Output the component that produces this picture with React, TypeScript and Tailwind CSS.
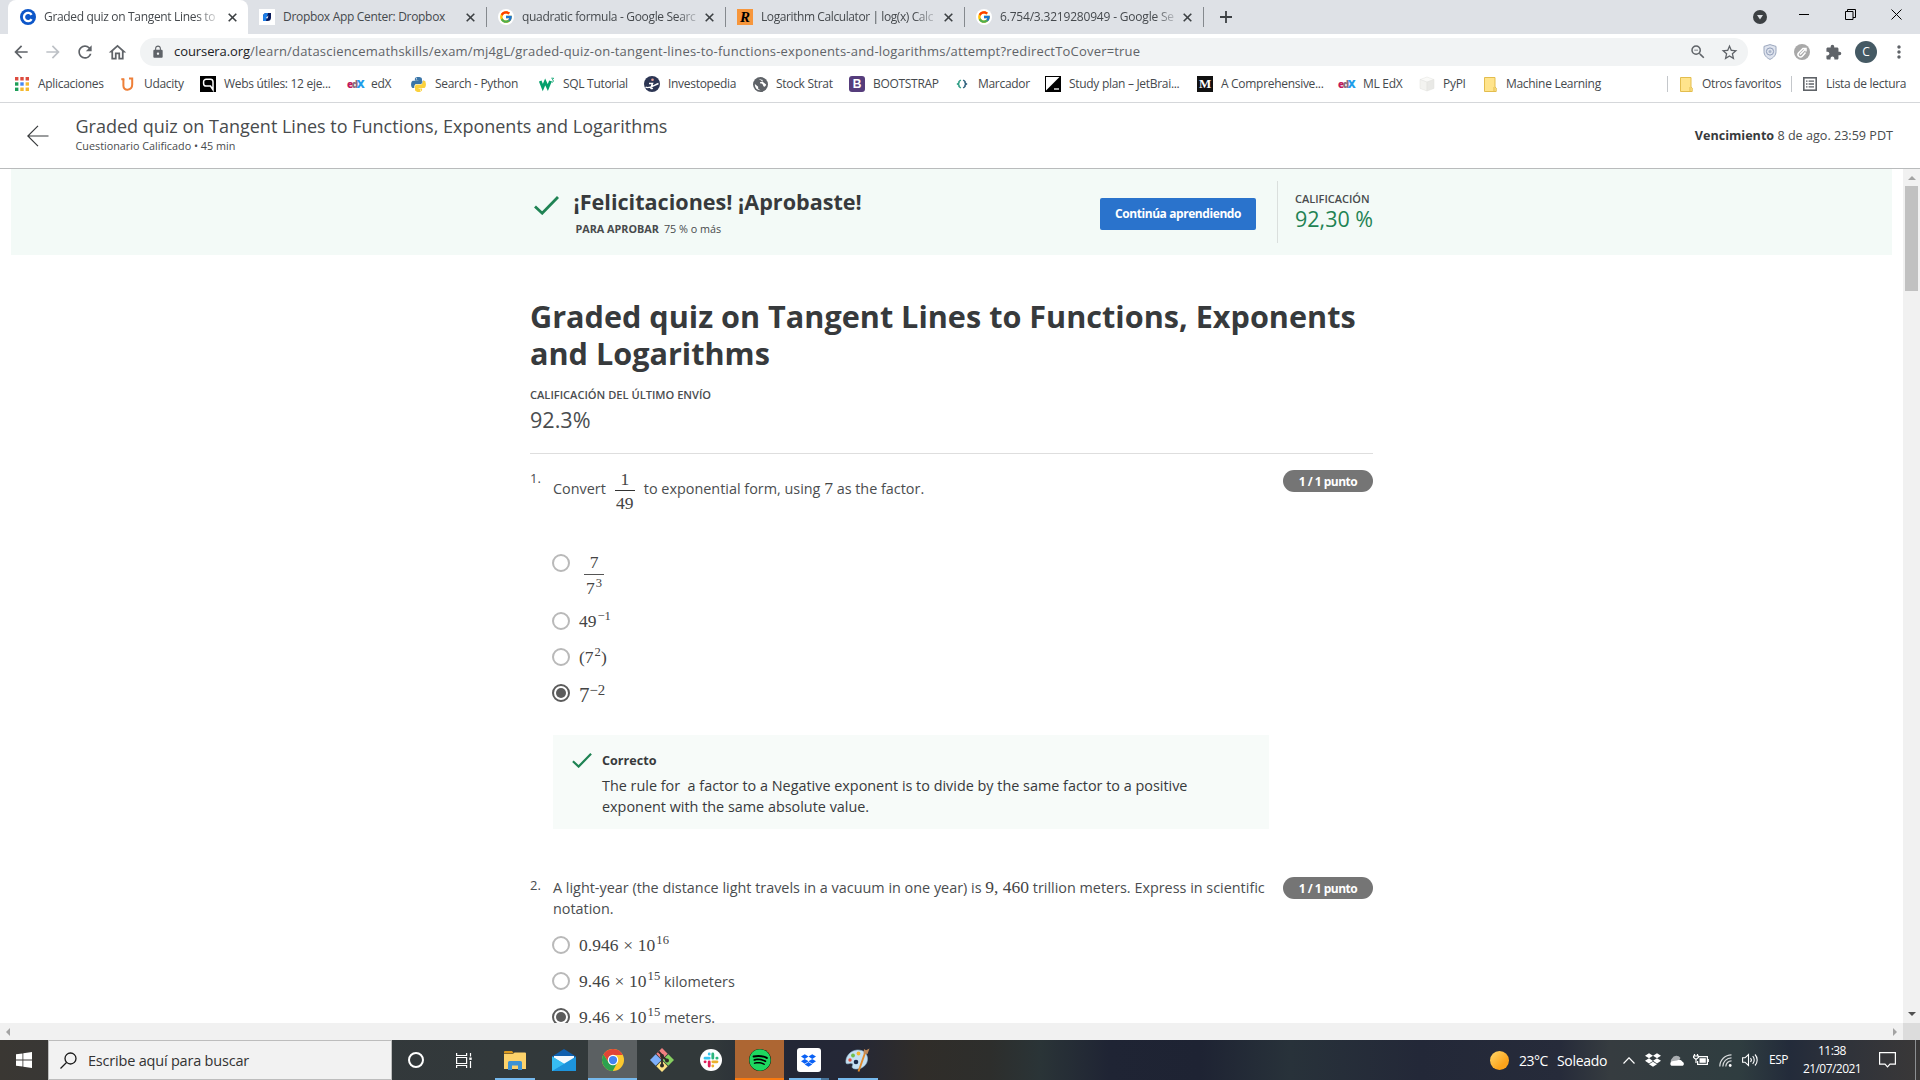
import React from "react";
import { FcGoogle } from "react-icons/fc";
import { FaDropbox, FaSpotify, FaPython } from "react-icons/fa";
import {
  MdArrowBack,
  MdArrowForward,
  MdRefresh,
  MdOutlineHome,
  MdLock,
  MdStarBorder,
  MdExtension,
  MdMoreVert,
  MdZoomOut,
} from "react-icons/md";

type Kids = { children?: React.ReactNode };

/* ---------- site icons ---------- */

const CourseraIcon = () => (
  <svg className="size-4" viewBox="0 0 16 16">
    <circle cx="8" cy="8" r="8" fill="#0c56c9" />
    <path d="M11.6 5.9A4.1 4.1 0 1 0 11.6 10.1" fill="none" stroke="#fff" strokeWidth="2.3" />
  </svg>
);

const AppCenterIcon = () => (
  <svg className="size-4" viewBox="0 0 16 16">
    <rect width="16" height="16" fill="#fff" />
    <path d="M4 7.500A3.500 3.500 0 0 1 7.500 4H12v4.500A3.500 3.500 0 0 1 8.500 12H4z" fill="#0a1b5c" />
    <path d="M4 7.500A3.500 3.500 0 0 1 7.500 4H9L7 12H4z" fill="#1e7fe8" />
    <path d="M9.500 6.500L8.500 9.500 6.800 9z" fill="#fff" />
  </svg>
);

const GoogleIcon = () => (
  <span className="flex size-4 items-center justify-center rounded-full bg-white">
    <FcGoogle className="size-[14px]" />
  </span>
);

const RIcon = () => (
  <span className="flex size-4 items-center justify-center bg-[#f7963b] font-['Liberation_Serif',serif] text-[15px] leading-4 font-bold text-black italic">
    R
  </span>
);

const AppsIcon = () => (
  <svg className="size-[14px]" viewBox="0 0 14 14">
    <path d="M0 0h3.4v3.4H0zM5.3 0h3.4v3.4H5.3zM10.6 0H14v3.4h-3.4z" fill="#dd4b3e" />
    <path d="M0 5.3h3.4v3.4H0z" fill="#1e9e58" />
    <path d="M5.3 5.3h3.4v3.4H5.3z" fill="#4587f3" />
    <path d="M10.6 5.3H14v3.4h-3.4z" fill="#f5b92e" />
    <path d="M0 10.6h3.4V14H0z" fill="#1e9e58" />
    <path d="M5.3 10.6h3.4V14H5.3zM10.6 10.6H14V14h-3.4z" fill="#f5b92e" />
  </svg>
);

const UdacityIcon = () => (
  <svg className="h-[15px] w-[13px]" viewBox="0 0 13 15" fill="none" stroke="#ee7f38" strokeWidth="2">
    <path d="M2.400 2.200v6.600c0 2.600 1.800 4.200 4.200 4 2.800-.3 4.600-2.400 4.600-5.200V1.600H8" />
    <path d="M.3 2.200h3" />
  </svg>
);

const QIcon = () => (
  <svg className="size-4" viewBox="0 0 16 16">
    <rect width="16" height="16" fill="#000" />
    <path d="M13 13.800V5.800a2.600 2.600 0 0 0-2.600-2.600H6.200a2.600 2.600 0 0 0-2.600 2.600v1.600A2.600 2.600 0 0 0 6.200 10H10.500z" fill="none" stroke="#fff" strokeWidth="1.500" />
  </svg>
);

const EdxIcon = () => (
  <span className="flex w-4 items-center font-['Open_Sans',sans-serif] text-[10px] leading-4 font-extrabold tracking-[-1.500px]">
    <span className="text-[#c0185c]">e</span>
    <span className="text-[#8d6a7c]">d</span>
    <span className="text-[11px] text-[#1f9dea]">X</span>
  </span>
);

const PythonIcon = () => (
  <span className="relative block size-[17px]">
    <FaPython className="absolute inset-0 size-[17px] text-[#3a75a8] [clip-path:polygon(0_0,100%_0,100%_28%,70%_50%,30%_52%,25%_78%,0_78%)]" />
    <FaPython className="absolute inset-0 size-[17px] text-[#fbd13c] [clip-path:polygon(100%_22%,100%_100%,20%_100%,25%_72%,30%_52%,70%_50%,76%_22%)]" />
  </span>
);

const W3Icon = () => (
  <svg className="size-4" viewBox="0 0 16 16" fill="none" stroke="#04a06c">
    <path d="M1.200 5l2.600 6.500L6.200 6l2.600 5.500L11.500 5" strokeWidth="2.800" />
    <path d="M12.300 2.200h2.300l-1.200 1.600a1.200 1.200 0 1 1-1.300 1.700" strokeWidth=".9" />
  </svg>
);

const InvestopediaIcon = () => (
  <svg className="size-4" viewBox="0 0 16 16">
    <circle cx="8" cy="8" r="8" fill="#2c3553" />
    <circle cx="8.500" cy="3.800" r="1.300" fill="#e8a49a" />
    <path d="M5 7.500h3.500L7 11.500c-.4 1.200.6 1.400 1.800.7M1.500 11c3 2.500 8-1.500 13-3.500" fill="none" stroke="#fff" strokeWidth="1.500" />
  </svg>
);

const GlobeIcon = () => (
  <svg className="size-[15px]" viewBox="0 0 16 16">
    <circle cx="8" cy="8" r="8" fill="#5f6368" />
    <path d="M2 7.500l3.500 3v2L8 14c-3.500.2-6.200-2.500-6-6.500zM6.500 2.200c1.500 0 2 1 3.500.8 1 2-.5 2.500-2.500 2.700-.5 1.500 1 1 2.500 1.800 1 .8.500 2.500 2 3 1.200-.5 2-1.500 2-2.500" fill="#fff" />
  </svg>
);

const BootstrapIcon = () => (
  <span className="flex size-4 items-center justify-center rounded-[3px] bg-[#563d7c] font-['Liberation_Sans',sans-serif] text-[12px] leading-4 font-bold text-white">
    B
  </span>
);

const BracketsIcon = () => (
  <svg className="h-4 w-3" viewBox="0 0 12 16" fill="none" strokeWidth="1.500">
    <path d="M4.800 4L3 5.500v1.300L1.600 8 3 9.200v1.300L4.800 12" stroke="#2b9c83" />
    <path d="M7.200 4L9 5.500v1.300L10.400 8 9 9.200v1.300L7.200 12" stroke="#2d5f7c" />
  </svg>
);

const JetbrainsIcon = () => (
  <svg className="size-4" viewBox="0 0 16 16">
    <rect width="16" height="16" fill="#000" />
    <path d="M1 1h13.500L1 14.500z" fill="#fff" />
    <path d="M9 13h5" stroke="#fff" strokeWidth="1.300" />
  </svg>
);

const MediumIcon = () => (
  <span className="flex size-4 items-center justify-center bg-[#111] font-['Liberation_Serif',serif] text-[13px] leading-4 font-bold text-white">
    M
  </span>
);

const PypiIcon = () => (
  <svg className="size-4" viewBox="0 0 16 16" stroke="#e2e2df" strokeWidth=".5">
    <path d="M1 3.500L8 1l7 2.500-7 2.600z" fill="#fafaf8" />
    <path d="M1 3.500l7 2.600V15l-7-2.600z" fill="#f3f3f0" />
    <path d="M15 3.500L8 6.100V15l7-2.600z" fill="#e9e9e6" />
  </svg>
);

const FolderMark = () => (
  <svg className="h-[15px] w-[13px]" viewBox="0 0 13 15">
    <path d="M.5.500h10.500v9.500l1.200 1v3.500H.5z" fill="#ffe48c" stroke="#e3bd4e" />
    <path d="M10 10v4.500" stroke="#e3bd4e" />
  </svg>
);

const ReadingListIcon = () => (
  <svg className="size-[14px]" viewBox="0 0 14 14" fill="none" stroke="#5f6368" strokeWidth="1.600">
    <rect x=".8" y=".8" width="12.400" height="12.400" />
    <path d="M3 4.200h1.500M5.600 4.200H11M3 7h1.500M5.600 7H11M3 9.800h1.500M5.600 9.800H11" strokeWidth="1.300" />
  </svg>
);

/* ---------- browser chrome ---------- */

const tabs = [
  { icon: <GoogleIcon />, title: "quadratic formula - Google Searc", cls: "tracking-[-0.33px]", fade: true },
  { icon: <RIcon />, title: "Logarithm Calculator | log(x) Calc", cls: "tracking-[-0.41px]", fade: true },
  { icon: <GoogleIcon />, title: "6.754/3.3219280949 - Google Se", cls: "tracking-[-0.19px]", fade: true },
];

const CloseGlyph = () => (
  <svg className="size-[9px] shrink-0" viewBox="0 0 9 9" stroke="#3c4043" strokeWidth="1.600">
    <path d="M.7.700l7.600 7.600M8.300.700L.7 8.300" />
  </svg>
);

function Tab({ icon, title, cls, active, fade }: { icon: React.ReactNode; title: string; cls: string; active?: boolean; fade?: boolean }) {
  return (
    <div
      className={
        active
          ? "flex h-[34px] w-[240px] items-center rounded-t-lg bg-white pr-[11px] pl-3"
          : "flex h-[34px] w-[239px] items-center pr-[12px] pl-[11px]"
      }
    >
      <span className="w-6 shrink-0">{icon}</span>
      <span
        className={
          (fade ? "[mask-image:linear-gradient(to_right,black_89%,rgba(0,0,0,0.25))] " : "") +
          "text-[12px] leading-[18px] whitespace-nowrap text-[#45494d] " +
          cls
        }
      >
        {title}
      </span>
      <span className="ml-auto">
        <CloseGlyph />
      </span>
    </div>
  );
}

const TabDivider = () => <span className="-ml-px h-5 w-px bg-[#85898e]" />;

function TabStrip() {
  return (
    <div className="flex h-[34px] items-center bg-[#dee1e6] pl-2">
      <Tab active fade icon={<CourseraIcon />} title="Graded quiz on Tangent Lines to" cls="tracking-[-0.33px]" />
      <Tab icon={<AppCenterIcon />} title="Dropbox App Center: Dropbox" cls="tracking-[-0.31px]" />
      <TabDivider />
      {tabs.map((t) => (
        <React.Fragment key={t.title}>
          <Tab {...t} />
          <TabDivider />
        </React.Fragment>
      ))}
      <svg className="ml-4 size-3" viewBox="0 0 12 12" stroke="#3c4043" strokeWidth="1.800">
        <path d="M6 0v12M0 6h12" />
      </svg>
      <div className="ml-auto flex items-center pb-[5px]">
        <svg className="mt-[5px] size-[14px]" viewBox="0 0 14 14">
          <circle cx="7" cy="7" r="7" fill="#3c4043" />
          <path d="M4 5h6L7 9.500z" fill="#dee1e6" />
        </svg>
        <svg className="ml-8 h-[11px] w-[10px]" viewBox="0 0 10 11" stroke="#000">
          <path d="M0 5.500h10" />
        </svg>
        <svg className="ml-[36px] size-[11px]" viewBox="0 0 11 11" fill="none" stroke="#000">
          <path d="M.5 2.500h7.500v8H.5zM2.500 2.500v-2h8v8H8" />
        </svg>
        <svg className="mr-[18px] ml-[35px] size-[11px]" viewBox="0 0 11 11" stroke="#000">
          <path d="M.5.500l10 10M10.500.500l-10 10" />
        </svg>
      </div>
    </div>
  );
}

function Toolbar() {
  return (
    <div className="flex h-[34px] items-center bg-white pt-[2px] text-[#5f6368]">
      <div className="flex w-[140px] items-center gap-[12px] pl-[11px]">
        <MdArrowBack className="size-5" />
        <MdArrowForward className="size-5 text-[#bdc1c6]" />
        <MdRefresh className="size-5" />
        <MdOutlineHome className="size-[21px]" />
      </div>
      <div className="flex h-7 w-[1608px] items-center rounded-full bg-[#f1f3f4] pr-[9px] pl-[11px]">
        <MdLock className="size-[14px]" />
        <p className="ml-[9px] text-[13px] whitespace-nowrap text-[#5f6368]">
          <span className="tracking-[-0.08px] text-[#202124]">coursera.org</span>
          <span className="tracking-[0.199px]">
            /learn/datasciencemathskills/exam/mj4gL/graded-quiz-on-tangent-lines-to-functions-exponents-and-logarithms/attempt?redirectToCover=true
          </span>
        </p>
        <MdZoomOut className="ml-auto size-[18px]" />
        <MdStarBorder className="ml-[13px] size-[19px]" />
      </div>
      <svg className="ml-[15px] h-4 w-[14px]" viewBox="0 0 14 16" fill="none">
        <path d="M7 .6l6 1.800v5.200c0 3.600-2.500 6.200-6 7.800-3.500-1.600-6-4.200-6-7.800V2.400z" fill="#dfe4ee" stroke="#9aa6bd" />
        <circle cx="7" cy="7.500" r="3.600" stroke="#8f9cb8" />
        <circle cx="7" cy="7.500" r="1.500" fill="#aab5ca" />
      </svg>
      <svg className="ml-[17px] size-4" viewBox="0 0 16 16">
        <circle cx="8" cy="8" r="8" fill="#a9a9a9" />
        <path d="M6 10.500l5-5M11.500 8.500L8.500 12a2.500 2.500 0 0 1-4-3L9 4.500h3v3" fill="none" stroke="#fff" strokeWidth="1.500" />
      </svg>
      <MdExtension className="ml-[15px] size-[17px]" />
      <span className="ml-[13px] flex size-[22px] items-center justify-center rounded-full bg-[#455a64] text-[12px] text-white">C</span>
      <MdMoreVert className="ml-[12px] size-5" />
    </div>
  );
}

const Bookmark = ({ icon, label, w, gap = "w-6" }: { icon: React.ReactNode; label: string; w: string; gap?: string }) => (
  <div className={"flex shrink-0 items-center " + w}>
    <span className={"flex shrink-0 items-center " + gap}>{icon}</span>
    <span className="text-[12px] whitespace-nowrap">{label}</span>
  </div>
);

function BookmarkBar() {
  return (
    <div className="flex h-[35px] items-center border-b border-[#d5d7da] bg-white pb-[2px] pl-[15px] tracking-[-0.3px] text-[#45494d]">
      <Bookmark icon={<AppsIcon />} label="Aplicaciones" w="w-[106px]" gap="w-[23px]" />
      <Bookmark icon={<UdacityIcon />} label="Udacity" w="w-[79px]" gap="w-[23px]" />
      <Bookmark icon={<QIcon />} label="Webs útiles: 12 eje..." w="w-[147px]" />
      <Bookmark icon={<EdxIcon />} label="edX" w="w-[63px]" />
      <Bookmark icon={<PythonIcon />} label="Search - Python" w="w-[129px]" gap="w-[25px]" />
      <Bookmark icon={<W3Icon />} label="SQL Tutorial" w="w-[105px]" />
      <Bookmark icon={<InvestopediaIcon />} label="Investopedia" w="w-[109px]" />
      <Bookmark icon={<GlobeIcon />} label="Stock Strat" w="w-[96px]" gap="w-[23px]" />
      <Bookmark icon={<BootstrapIcon />} label="BOOTSTRAP" w="w-[107px]" />
      <Bookmark icon={<BracketsIcon />} label="Marcador" w="w-[89px]" gap="w-[22px]" />
      <Bookmark icon={<JetbrainsIcon />} label="Study plan – JetBrai..." w="w-[152px]" />
      <Bookmark icon={<MediumIcon />} label="A Comprehensive..." w="w-[141px]" />
      <Bookmark icon={<EdxIcon />} label="ML EdX" w="w-[81px]" gap="w-[25px]" />
      <Bookmark icon={<PypiIcon />} label="PyPI" w="w-[65px]" />
      <Bookmark icon={<FolderMark />} label="Machine Learning" w="w-[183px]" gap="w-[22px]" />
      <span className="mr-3 h-4 w-px bg-[#c4c7cb]" />
      <Bookmark icon={<FolderMark />} label="Otros favoritos" w="w-[111px]" gap="w-[22px]" />
      <span className="mr-[11px] h-4 w-px bg-[#c4c7cb]" />
      <Bookmark icon={<ReadingListIcon />} label="Lista de lectura" w="w-[103px]" gap="w-[23px]" />
    </div>
  );
}

/* ---------- quiz page ---------- */

const Check = ({ className }: { className: string }) => (
  <svg className={className} viewBox="0 0 25 19" fill="none" stroke="#1f8354" strokeWidth="2.800">
    <path d="M1 10.500l7.200 6.700L24 1" />
  </svg>
);

const M = ({ children }: Kids) => (
  <span className="font-['Liberation_Serif',serif] text-[17.500px] leading-5 whitespace-nowrap text-[#444]">{children}</span>
);

const Sup = ({ children }: Kids) => <span className="relative top-[-7px] ml-px text-[12.600px]">{children}</span>;

function QuizHeader() {
  return (
    <header className="flex h-[66px] items-center border-b border-[#b9bbbc] bg-white pr-[27px] pl-[27px]">
      <svg className="h-[22px] w-[22px]" viewBox="0 0 22 22" fill="none" stroke="#373a3c" strokeWidth="1.200">
        <path d="M11 .8L.8 11 11 21.200M.8 11H21.500" />
      </svg>
      <div className="ml-[26.500px] pb-[4px]">
        <h2 className="text-[18px] leading-6 text-[#484b4d]">Graded quiz on Tangent Lines to Functions, Exponents and Logarithms</h2>
        <p className="mt-px text-[10.800px] leading-[14px] text-[#484b4d]">Cuestionario Calificado • 45 min</p>
      </div>
      <p className="mt-px ml-auto text-[12.600px] text-[#484b4d]">
        <b className="text-[#373a3c]">Vencimiento</b> 8 de ago. 23:59 PDT
      </p>
    </header>
  );
}

function ResultBanner() {
  return (
    <section className="ml-[11px] h-[86px] w-[1881px] bg-[#f3faf7] pl-[519px]">
      <div className="flex h-full w-[843px] pl-1">
        <Check className="mt-[27px] h-[19px] w-[25px]" />
        <div className="mt-[19px] ml-[14.500px]">
          <h3 className="text-[21.600px] leading-7 font-bold text-[#373a3c]">¡Felicitaciones! ¡Aprobaste!</h3>
          <p className="mt-[5px] ml-[2px] text-[10.800px] leading-4 text-[#484b4d]">
            <b className="mr-[5px]">PARA APROBAR</b>75 % o más
          </p>
        </div>
        <button className="mt-[29px] ml-auto h-8 w-[156px] rounded-[2px] bg-[#2a73cc] text-[12px] font-bold tracking-[-0.42px] text-white">
          Continúa aprendiendo
        </button>
        <div className="mt-3 ml-[21px] h-[62px] w-[96px] border-l border-[#dadfdd] pl-[17px]">
          <p className="mt-[10px] text-[11px] leading-4 font-semibold text-[#484b4d]">CALIFICACIÓN</p>
          <p className="-mt-[2px] text-[21.500px] leading-7 whitespace-nowrap text-[#1f8354]">92,30 %</p>
        </div>
      </div>
    </section>
  );
}

const Radio = ({ on }: { on?: boolean }) => (
  <span
    className={
      on
        ? "-ml-px flex size-[18px] shrink-0 items-center justify-center rounded-full border-2 border-[#5c5c5c]"
        : "-ml-px block size-[18px] shrink-0 rounded-full border-2 border-[#b9b9b9]"
    }
  >
    {on && <span className="size-[10px] rounded-full bg-[#5c5c5c]" />}
  </span>
);

const Option = ({ on, children, h = "h-9" }: Kids & { on?: boolean; h?: string }) => (
  <div className={"flex items-center gap-[9px] " + h}>
    <Radio on={on} />
    <span className="pt-[2px] text-[14.400px] leading-5 whitespace-nowrap">{children}</span>
  </div>
);

const Pill = ({ className }: { className: string }) => (
  <span className={"ml-auto flex h-[22px] w-[90px] items-center justify-center rounded-full bg-[#757575] text-[12px] font-bold tracking-[-0.5px] text-white " + className}>
    1 / 1 punto
  </span>
);

const Times = () => <span className="mx-[4.800px]">×</span>;

function Quiz() {
  return (
    <div className="ml-[530px] w-[843px] text-[14.400px] leading-[21px] text-[#4a4d4f]">
      <h1 className="pt-[43px] text-[30.620px] leading-[37px] font-bold text-[#373a3c]">
        Graded quiz on Tangent Lines to Functions, Exponents and Logarithms
      </h1>
      <p className="mt-[15px] text-[11.100px] leading-4 font-semibold">CALIFICACIÓN DEL ÚLTIMO ENVÍO</p>
      <p className="mt-[3px] text-[21.600px] leading-7">92.3%</p>
      <hr className="mt-[19px] border-[#dedede]" />

      <section className="flex pt-[14px]">
        <span className="w-[23px] shrink-0 text-[13px] leading-5">1.</span>
        <div className="w-[716px]">
          <div className="flex h-11 items-center">
            <span className="pb-[3px]">Convert</span>
            <span className="mx-[9px] flex w-5 flex-col items-center">
              <span className="flex h-[23px] w-full justify-center border-b border-[#333] pt-px">
                <M>1</M>
              </span>
              <span className="mt-[2px] flex">
                <M>49</M>
              </span>
            </span>
            <span className="pb-[3px] whitespace-pre">
              to exponential form, using <M>7</M> as the factor.
            </span>
          </div>
          <div className="mt-[39px]">
            <div className="flex h-[47px] gap-[14px]">
              <span className="mt-[3px]">
                <Radio />
              </span>
              <span className="flex w-5 flex-col items-center">
                <span className="flex h-6 w-full justify-center border-b border-[#555] pt-px">
                  <M>7</M>
                </span>
                <span className="mt-[3px] flex h-5">
                  <M>
                    7<Sup>3</Sup>
                  </M>
                </span>
              </span>
            </div>
            <div className="mt-1">
              <Option h="h-[37px]">
                <M>
                  49<Sup>−1</Sup>
                </M>
              </Option>
              <Option>
                <M>
                  (7<Sup>2</Sup>)
                </M>
              </Option>
              <Option on>
                <span className="relative top-[2px] font-['Liberation_Serif',serif] text-[21px] leading-5 text-[#444]">
                  7<span className="relative top-[-7px] text-[14.800px]">−2</span>
                </span>
              </Option>
            </div>
          </div>
          <div className="mt-6 flex h-[94px] bg-[#f7fbf9] pl-[19px]">
            <Check className="mt-[18px] h-[15px] w-5" />
            <div className="mt-[15px] ml-[10px] text-[14.400px] leading-[21px] text-[#373a3c]">
              <p className="text-[12.600px] leading-[21px] font-bold">Correcto</p>
              <p className="mt-[4px] whitespace-pre">The rule for  a factor to a Negative exponent is to divide by the same factor to a positive</p>
              <p>exponent with the same absolute value.</p>
            </div>
          </div>
        </div>
        <Pill className="mt-[2px]" />
      </section>

      <section className="flex pt-[48px]">
        <span className="w-[23px] shrink-0 text-[13px] leading-[17px]">2.</span>
        <div className="w-[716px]">
          <div className="h-[50px] whitespace-nowrap">
            A light-year (the distance light travels in a vacuum in one year) is <M>9, 460</M> trillion meters. Express in scientific
            <br />
            notation.
          </div>
          <Option>
            <M>
              0.946
              <Times />
              10<Sup>16</Sup>
            </M>
          </Option>
          <Option>
            <M>
              9.46
              <Times />
              10<Sup>15</Sup>
            </M>{" "}
            kilometers
          </Option>
          <Option on>
            <M>
              9.46
              <Times />
              10<Sup>15</Sup>
            </M>{" "}
            meters.
          </Option>
        </div>
        <Pill className="" />
      </section>
    </div>
  );
}

function Viewport() {
  return (
    <div className="flex h-[854px] bg-white">
      <main className="h-full w-[1903px] overflow-hidden">
        <ResultBanner />
        <Quiz />
      </main>
      <div className="flex w-[17px] flex-col items-center bg-[#f1f1f1]">
        <span className="mt-[7px] mb-[6px] border-x-4 border-b-4 border-x-transparent border-b-[#a3a3a3]" />
        <span className="h-[105px] w-[13px] bg-[#c1c1c1]" />
        <span className="mt-auto mb-[7px] border-x-4 border-t-4 border-x-transparent border-t-[#505050]" />
      </div>
    </div>
  );
}

const HorizontalScrollbar = () => (
  <div className="flex h-[17px] items-center bg-[#f1f1f1] pl-[6px]">
    <span className="border-y-4 border-r-4 border-y-transparent border-r-[#a3a3a3]" />
    <span className="mr-[6px] ml-auto border-y-4 border-l-4 border-y-transparent border-l-[#a3a3a3]" />
    <span className="h-full w-[17px] bg-[#dcdcdc]" />
  </div>
);

/* ---------- taskbar ---------- */

const TaskCell = ({ children, bg = "", bar = "" }: Kids & { bg?: string; bar?: string }) => (
  <div className={"relative flex h-full w-[49px] items-center justify-center " + bg}>
    {children}
    {bar && <span className={"absolute bottom-0 h-[2px] " + bar} />}
  </div>
);

const ExplorerIcon = () => (
  <svg className="h-[19px] w-[22px]" viewBox="0 0 22 19">
    <path d="M0 1a1 1 0 0 1 1-1h7l2 2.500H0z" fill="#dc9a1e" />
    <path d="M0 3h9l1.500-1.500H21a1 1 0 0 1 1 1V18H0z" fill="#fdd26a" />
    <path d="M4 19v-7.500a1.500 1.500 0 0 1 1.500-1.500h11a1.500 1.500 0 0 1 1.500 1.500V19h-4v-4.500H8V19z" fill="#3d92d4" />
  </svg>
);

const MailIcon = () => (
  <svg className="h-[22px] w-6" viewBox="0 0 24 22">
    <path d="M0 7.500L12 0l12 7.500-12 8z" fill="#0f5fae" />
    <path d="M2 7h20v6l-10 4L2 11z" fill="#f4f9fd" />
    <path d="M0 7.500L24 22H0z" fill="#2cb3ee" />
    <path d="M24 7.500L0 22h24z" fill="#1d94dc" />
    <path d="M0 7.500l12 7.300L0 22z" fill="#37bdf2" />
  </svg>
);

const ChromeIcon = () => (
  <svg className="size-[22px]" viewBox="0 0 48 48">
    <circle cx="24" cy="24" r="24" fill="#fbc82f" />
    <path d="M24 13h21.300a24 24 0 0 0-42-1.200L14.500 29.500z" fill="#e04436" />
    <path d="M3.300 11.800A24 24 0 0 0 23.500 48l10-18.500-19 0z" fill="#2da14f" />
    <circle cx="24" cy="24" r="11.500" fill="#fff" />
    <circle cx="24" cy="24" r="9" fill="#4484f1" />
  </svg>
);

const GitIcon = () => (
  <svg className="size-6" viewBox="0 0 24 24">
    <path d="M12 0l5.700 5.700L12 11.500 6.300 5.700z" fill="#f08080" />
    <path d="M5.700 6.300L11.500 12l-5.800 5.700L0 12z" fill="#7eb0fb" />
    <path d="M18.300 6.300L24 12l-5.700 5.700L12.500 12z" fill="#86cf60" />
    <path d="M12 12.500l5.700 5.800L12 24l-5.700-5.700z" fill="#fde383" />
    <path d="M8.500 3.500L12 7v10.500M12 8l5 4.500" fill="none" stroke="#2e2a28" strokeWidth="1.800" />
    <circle cx="12" cy="8" r="2" fill="#2e2a28" />
    <circle cx="12" cy="17.500" r="2" fill="#2e2a28" />
    <circle cx="17" cy="12.500" r="2" fill="#2e2a28" />
  </svg>
);

const SlackIcon = () => (
  <svg className="size-[22px]" viewBox="0 0 22 22" strokeWidth="2.800" strokeLinecap="round">
    <circle cx="11" cy="11" r="11" fill="#fff" />
    <path d="M5 9.200h4.200M9.200 4.900v.3" stroke="#36c5f0" />
    <path d="M12.800 5v4.200M16.800 9.200h.3" stroke="#2eb67d" />
    <path d="M17 12.800h-4.200M12.800 16.800v.3" stroke="#ecb22e" />
    <path d="M9.200 17v-4.200M5 12.800h.2" stroke="#e01e5a" />
  </svg>
);

const PaintIcon = () => (
  <svg className="h-6 w-[25px]" viewBox="0 0 25 24">
    <path d="M1 15C0 9 5 2.500 12 2c6-.4 10 3 10.500 8 .5 6-4.500 11-11 11-4 0-5-1.500-4-3.500 1-2-1-2.500-3-2-1.800.5-3.200.5-3.500-.5z" fill="#c5e0f2" stroke="#8db4cf" strokeWidth=".6" />
    <circle cx="5" cy="12" r="1.700" fill="#e2533f" />
    <circle cx="8" cy="7.500" r="1.900" fill="#6fbf4b" />
    <circle cx="13.500" cy="5.500" r="1.900" fill="#f2b632" />
    <circle cx="11" cy="14" r="2.300" fill="#1c2c4a" />
    <path d="M13.500 23.500L20 5" stroke="#e08a2c" strokeWidth="1.900" />
    <path d="M18.500 5.500L19 1l2 1.200L24.500.500l-2 5.500z" fill="#c08a58" />
  </svg>
);

function Taskbar() {
  return (
    <footer className="flex h-10 items-center bg-[linear-gradient(to_right,#3a3733_0px,#34373a_200px,#32393b_500px,#32393a_710px,#232736_790px,#242736_850px,#302d29_920px,#2d2e2c_990px,#2a3437_1040px,#1f2434_1110px,#1e2333_1200px,#28323a_1290px,#232838_1420px,#262b3a_1560px,#363c40_1610px,#2f3d40_1740px,#232b3a_1790px,#30333a_1850px,#3a3838_1920px)] text-white">
      <div className="flex w-12 justify-center">
        <svg className="size-4" viewBox="0 0 16 16" fill="#fff">
          <path d="M0 2.300l6.500-.9v6.200H0zM7.300 1.300L16 0v7.600H7.300zM0 8.400h6.500v6.200L0 13.700zM7.300 8.400H16V16l-8.700-1.300z" />
        </svg>
      </div>
      <div className="flex h-full w-[344px] items-center border border-[#bdbdbd] bg-[#f2f2f2] pl-[11px]">
        <svg className="size-[17px]" viewBox="0 0 17 17" fill="none" stroke="#1a1a1a" strokeWidth="1.300">
          <circle cx="10.500" cy="6.500" r="5.500" />
          <path d="M6.500 10.500L.5 16.500" />
        </svg>
        <span className="mt-px ml-[11px] text-[14.500px] tracking-[-0.200px] text-[#333]">Escribe aquí para buscar</span>
      </div>
      <TaskCell>
        <span className="mr-[2px] size-4 rounded-full border-2 border-white" />
      </TaskCell>
      <TaskCell>
        <svg className="mr-[3px] h-[15px] w-4" viewBox="0 0 16 15" fill="none" stroke="#fff" strokeWidth="1.200">
          <path d="M.6 0v2.500h10V0M.6 15v-2.500h10V15M.6 4.500h10v6H.6zM14.500 0v3.500M14.500 8v7" />
          <path d="M13.300 4.500h2.400v2.400h-2.400z" fill="#fff" stroke="none" />
        </svg>
      </TaskCell>
      <TaskCell bar="w-10 bg-[#76b9ed]">
        <ExplorerIcon />
      </TaskCell>
      <TaskCell>
        <MailIcon />
      </TaskCell>
      <TaskCell bg="bg-[#5b6062]" bar="w-full bg-[#76b9ed]">
        <ChromeIcon />
      </TaskCell>
      <TaskCell>
        <GitIcon />
      </TaskCell>
      <TaskCell>
        <SlackIcon />
      </TaskCell>
      <TaskCell bg="bg-[#ad6633]" bar="w-full bg-[#f97a10]">
        <span className="flex size-[22px] rounded-full bg-black">
          <FaSpotify className="size-[22px] text-[#1ed760]" />
        </span>
      </TaskCell>
      <TaskCell bar="w-10 bg-[linear-gradient(to_right,#76b9ed_32px,#47749a_32px)]">
        <span className="flex size-6 items-center justify-center rounded-[3px] bg-white">
          <FaDropbox className="size-[15px] text-[#0a61f5]" />
        </span>
      </TaskCell>
      <TaskCell bar="w-10 bg-[#76b9ed]">
        <PaintIcon />
      </TaskCell>

      <div className="ml-auto flex h-full items-center">
        <span className="w-[29px]">
          <span className="block size-[19px] rounded-full bg-[linear-gradient(135deg,#ffd86b,#fba31b_70%)]" />
        </span>
        <span className="mt-px w-[38px] text-[14px] tracking-[-0.500px] whitespace-nowrap">23°C</span>
        <span className="mt-px w-[58px] text-[14px] tracking-[-0.320px]">Soleado</span>
        <span className="flex w-[27px] justify-center">
          <svg className="h-[7px] w-3" viewBox="0 0 12 7" fill="none" stroke="#fff" strokeWidth="1.200">
            <path d="M.5 6.500L6 .8l5.500 5.700" />
          </svg>
        </span>
        <span className="flex w-[22px] justify-center">
          <FaDropbox className="size-4" />
        </span>
        <span className="flex w-[25px] justify-center">
          <svg className="h-[11px] w-4" viewBox="0 0 16 11">
            <path d="M3.500 9A3.300 3.300 0 0 1 3 3.500 4.800 4.800 0 0 1 11.500 3L8 8z" fill="#a9adb0" />
            <path d="M2.500 10.800a2.500 2.500 0 0 1 .5-4.500L8 5.500a4 4 0 0 1 5.500 1.300 2.200 2.200 0 0 1 .2 4z" fill="#fff" />
          </svg>
        </span>
        <span className="flex w-6 justify-center">
          <svg className="h-3 w-4" viewBox="0 0 16 12" fill="none" stroke="#fff" strokeWidth="1.200">
            <path d="M6 2.600h8.400v7.800H4.600V7" />
            <path d="M6.500 4.200h6.300v4.600H6.500z" fill="#fff" stroke="none" />
            <path d="M15.300 5v3M1.500 0v2M4.500 0v2M.6 2h4.800v1.500L3 5.500.6 3.500zM3 5.500V9" />
          </svg>
        </span>
        <span className="flex w-[25px] justify-center">
          <svg className="size-[13px]" viewBox="0 0 13 13" fill="none" stroke="#d8dbdc" strokeWidth="1.200">
            <path d="M.8 12.500A11.700 11.700 0 0 1 12.500.800M3.800 12.500a8.700 8.700 0 0 1 8.700-8.700M6.800 12.500a5.700 5.700 0 0 1 5.700-5.700" />
            <circle cx="11.200" cy="11.500" r="1.400" fill="#fff" stroke="none" />
          </svg>
        </span>
        <span className="flex w-[23px] justify-center">
          <svg className="h-[14px] w-4" viewBox="0 0 16 14" fill="none" stroke="#fff" strokeWidth="1.100">
            <path d="M.6 4.800h2.400L6.500 1.500v11L3 9.200H.6zM8.500 5a3 3 0 0 1 0 4M10.700 3.200a5.500 5.500 0 0 1 0 7.600M13 1.500a8 8 0 0 1 0 11" />
          </svg>
        </span>
        <span className="w-[35px] text-center text-[12px] tracking-[-0.500px]">ESP</span>
        <span className="w-[72px] text-center text-[12px] leading-[18px] tracking-[-0.550px]">
          11:38
          <br />
          21/07/2021
        </span>
        <span className="flex w-[38px] justify-center">
          <svg className="h-4 w-[17px]" viewBox="0 0 17 16" fill="none" stroke="#fff" strokeWidth="1.200">
            <path d="M.6.600h15.800v11.600H11L8.500 14.800 6 12.200H.6z" />
          </svg>
        </span>
        <span className="mr-1 ml-[9px] h-full w-px bg-[#8d8f92]" />
      </div>
    </footer>
  );
}

export default function App() {
  return (
    <div className="flex h-[1080px] w-[1920px] flex-col overflow-hidden bg-white font-['Open_Sans',sans-serif]">
      <TabStrip />
      <Toolbar />
      <BookmarkBar />
      <QuizHeader />
      <Viewport />
      <HorizontalScrollbar />
      <Taskbar />
    </div>
  );
}
